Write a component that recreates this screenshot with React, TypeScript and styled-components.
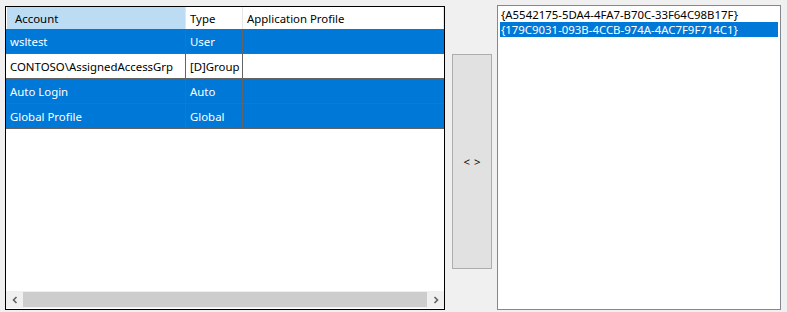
import { FC } from "react";
import styled, { createGlobalStyle } from "styled-components";

const GlobalStyle = createGlobalStyle`
  html, body {
    margin: 0;
    padding: 0;
    background: #f0f0f0;
    font-family: "Noto Sans", "Segoe UI", sans-serif;
    font-size: 11.4px;
  }
`;

const Window = styled.div`
  display: flex;
  align-items: flex-start;
  padding: 5px 0 0 5px;
  height: 312px;
  box-sizing: border-box;
`;

const GridPanel = styled.div`
  margin-top: 1px;
  width: 440px;
  height: 304px;
  box-sizing: border-box;
  border: 1px solid #000000;
  background: #ffffff;
  display: flex;
  flex-direction: column;
`;

const Columns = "180px 57px 1fr";

const HeaderRow = styled.div`
  display: grid;
  grid-template-columns: ${Columns};
  height: 22px;
`;

const HeaderCell = styled.div<{ active?: boolean }>`
  display: flex;
  align-items: center;
  padding-left: ${(p) => (p.active ? "8px" : "4px")};
  background: ${(p) => (p.active ? "#bcdcf4" : "#ffffff")};
  border-left: ${(p) => (p.active ? "1px solid #ffffff" : "none")};
  border-right: 1px solid #e5e5e5;
  color: #000000;
`;

const Body = styled.div`
  flex: 1;
`;

const Row = styled.div<{ selected?: boolean }>`
  display: grid;
  grid-template-columns: ${Columns};
  height: 25px;
  box-sizing: border-box;
  border-bottom: 1px solid #646464;
  background: ${(p) => (p.selected ? "#0078d7" : "#ffffff")};
  color: ${(p) => (p.selected ? "#ffffff" : "#000000")};
`;

const Cell = styled.div`
  display: flex;
  align-items: center;
  padding-left: 4px;
  border-right: 1px solid #646464;
  white-space: nowrap;
  overflow: hidden;

  &:last-child {
    border-right: none;
  }
`;

const ScrollBar = styled.div`
  height: 17px;
  display: flex;
  align-items: center;
  background: #f0f0f0;
  margin-bottom: 1px;
`;

const ScrollArrow = styled.div`
  width: 17px;
  height: 17px;
  display: flex;
  align-items: center;
  justify-content: center;
`;

const ScrollThumb = styled.div`
  flex: 1;
  height: 15px;
  background: #cdcdcd;
`;

const MoveButton = styled.div`
  margin: 49px 0 0 7px;
  width: 40px;
  height: 215px;
  box-sizing: border-box;
  border: 1px solid #adadad;
  background: #e1e1e1;
  display: flex;
  align-items: center;
  justify-content: center;
  color: #000000;
  word-spacing: 1px;
`;

const ListBox = styled.div`
  margin-left: 5px;
  width: 284px;
  height: 305px;
  box-sizing: border-box;
  border: 1px solid #828790;
  background: #ffffff;
  padding: 1px 2px;
`;

const ListItem = styled.div<{ selected?: boolean }>`
  height: 15px;
  line-height: 15px;
  padding-left: 1px;
  white-space: nowrap;
  overflow: hidden;
  background: ${(p) => (p.selected ? "#0078d7" : "transparent")};
  color: ${(p) => (p.selected ? "#ffffff" : "#000000")};
`;

const Chevron: FC<{ dir: "left" | "right" }> = ({ dir }) => (
  <svg width="8" height="8" viewBox="0 0 8 8">
    <path
      d={dir === "left" ? "M5.5 1 L2.5 4 L5.5 7" : "M2.5 1 L5.5 4 L2.5 7"}
      fill="none"
      stroke="#606060"
      strokeWidth="1.6"
    />
  </svg>
);

const rows = [
  { account: "wsltest", type: "User", profile: "", selected: true },
  { account: "CONTOSO\\AssignedAccessGrp", type: "[D]Group", profile: "", selected: false },
  { account: "Auto Login", type: "Auto", profile: "", selected: true },
  { account: "Global Profile", type: "Global", profile: "", selected: true },
];

const profiles = [
  { id: "{A5542175-5DA4-4FA7-B70C-33F64C98B17F}", selected: false },
  { id: "{179C9031-093B-4CCB-974A-4AC7F9F714C1}", selected: true },
];

const App: FC = () => {
  return (
    <>
      <GlobalStyle />
      <Window>
        <GridPanel>
          <HeaderRow>
            <HeaderCell active>Account</HeaderCell>
            <HeaderCell>Type</HeaderCell>
            <HeaderCell>Application Profile</HeaderCell>
          </HeaderRow>
          <Body>
            {rows.map((r) => (
              <Row key={r.account} selected={r.selected}>
                <Cell>{r.account}</Cell>
                <Cell>{r.type}</Cell>
                <Cell>{r.profile}</Cell>
              </Row>
            ))}
          </Body>
          <ScrollBar>
            <ScrollArrow>
              <Chevron dir="left" />
            </ScrollArrow>
            <ScrollThumb />
            <ScrollArrow>
              <Chevron dir="right" />
            </ScrollArrow>
          </ScrollBar>
        </GridPanel>
        <MoveButton>&lt; &gt;</MoveButton>
        <ListBox>
          {profiles.map((p) => (
            <ListItem key={p.id} selected={p.selected}>
              {p.id}
            </ListItem>
          ))}
        </ListBox>
      </Window>
    </>
  );
};

export default App;
